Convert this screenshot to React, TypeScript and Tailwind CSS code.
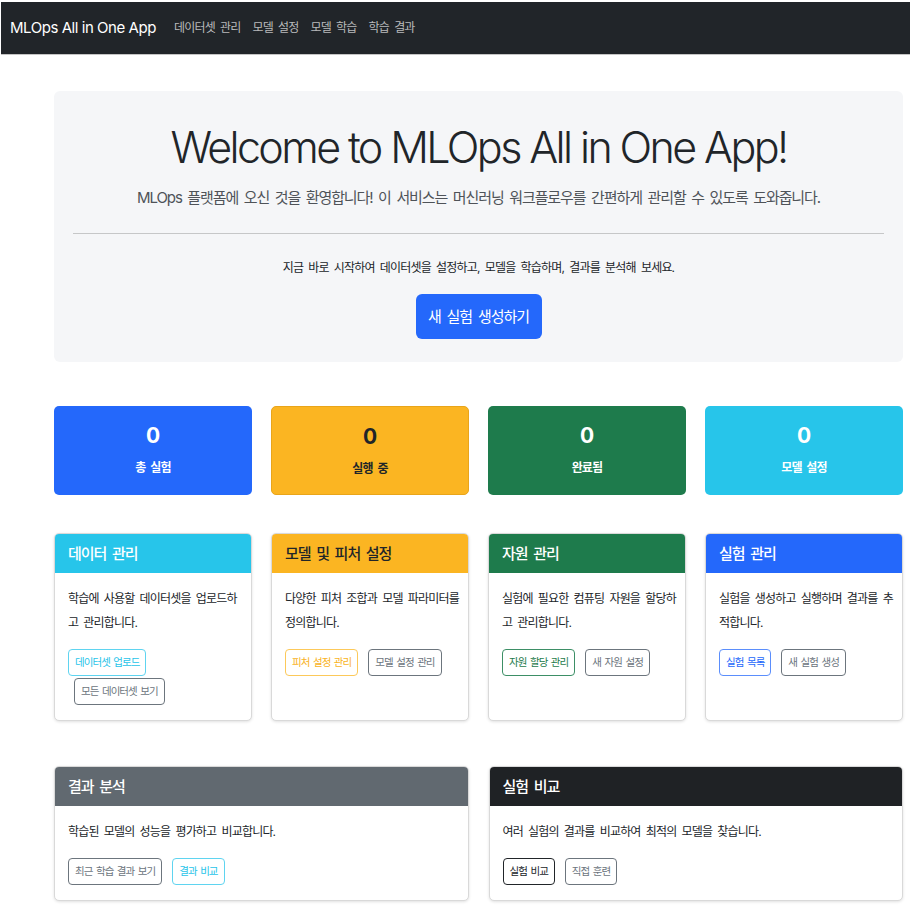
import React from "react";

const font = "font-['Inter','Noto_Sans_CJK_KR',sans-serif]";
// korean text tuned to the narrow look of the page
const k16 = "text-[12px] leading-[24px] tracking-[-0.8px] [word-spacing:2.5px]";
const k14 = "text-[10.5px] leading-[20px] tracking-[-0.95px] [word-spacing:1.5px]";
const k20 = "text-[15px] leading-[24px] tracking-[-1px] [word-spacing:2.6px]";

const navLinks = ["데이터셋 관리", "모델 설정", "모델 학습", "학습 결과"];

const stats = [
  { label: "총 실험", cls: "bg-[#2468fb] text-white" },
  { label: "실행 중", cls: "bg-[#fbb522] text-[#212529] border border-[#e9a51a]" },
  { label: "완료됨", cls: "bg-[#1e7b4c] text-white" },
  { label: "모델 설정", cls: "bg-[#27c5ea] text-white" },
];

type Btn = { label: string; variant: keyof typeof outline };

const outline = {
  info: "border-[#5fd4f0] text-[#27c4e9]",
  secondary: "border-[#6c757d] text-[#6c757d]",
  warning: "border-[#fcc95a] text-[#f9b21c]",
  success: "border-[#3d8f66] text-[#1e7b4c]",
  primary: "border-[#5b8efc] text-[#2468fb]",
  dark: "border-[#212529] text-[#212529]",
};

type Card = { title: string; head: string; lines: string[]; buttons: Btn[] };

const features: Card[] = [
  {
    title: "데이터 관리",
    head: "bg-[#27c5ea] text-white",
    lines: ["학습에 사용할 데이터셋을 업로드하", "고 관리합니다."],
    buttons: [
      { label: "데이터셋 업로드", variant: "info" },
      { label: "모든 데이터셋 보기", variant: "secondary" },
    ],
  },
  {
    title: "모델 및 피처 설정",
    head: "bg-[#fbb522] text-[#212529]",
    lines: ["다양한 피처 조합과 모델 파라미터를", "정의합니다."],
    buttons: [
      { label: "피처 설정 관리", variant: "warning" },
      { label: "모델 설정 관리", variant: "secondary" },
    ],
  },
  {
    title: "자원 관리",
    head: "bg-[#1e7b4c] text-white",
    lines: ["실험에 필요한 컴퓨팅 자원을 할당하", "고 관리합니다."],
    buttons: [
      { label: "자원 할당 관리", variant: "success" },
      { label: "새 자원 설정", variant: "secondary" },
    ],
  },
  {
    title: "실험 관리",
    head: "bg-[#2468fb] text-white",
    lines: ["실험을 생성하고 실행하며 결과를 추", "적합니다."],
    buttons: [
      { label: "실험 목록", variant: "primary" },
      { label: "새 실험 생성", variant: "secondary" },
    ],
  },
];

const bottom: Card[] = [
  {
    title: "결과 분석",
    head: "bg-[#616970] text-white",
    lines: ["학습된 모델의 성능을 평가하고 비교합니다."],
    buttons: [
      { label: "최근 학습 결과 보기", variant: "secondary" },
      { label: "결과 비교", variant: "info" },
    ],
  },
  {
    title: "실험 비교",
    head: "bg-[#1f2225] text-white",
    lines: ["여러 실험의 결과를 비교하여 최적의 모델을 찾습니다."],
    buttons: [
      { label: "실험 비교", variant: "dark" },
      { label: "직접 훈련", variant: "secondary" },
    ],
  },
];

function FeatureCard({ title, head, lines, buttons }: Card) {
  return (
    <div className="flex flex-col overflow-hidden rounded-[5px] border border-[#d9d9d9] bg-white shadow-[0_1px_3px_rgba(0,0,0,0.12)]">
      <div className={`flex h-[39px] items-center px-[13px] font-medium ${k20} ${head}`}>{title}</div>
      <div className="px-[13px] pt-[14px] pb-[15px]">
        <p className={`text-[#212529] ${k16}`}>
          {lines.map((l, i) => (
            <span key={i} className="block whitespace-nowrap">
              {l}
            </span>
          ))}
        </p>
        <div className="mt-[14px] flex flex-wrap items-start gap-x-[4px] gap-y-[2px]">
          {buttons.map((b, i) => (
            <button
              key={b.label}
              className={`h-[27px] whitespace-nowrap rounded-[4px] border bg-white px-[6px] ${k14} ${outline[b.variant]} ${i > 0 ? "ml-[6px]" : ""}`}
            >
              {b.label}
            </button>
          ))}
        </div>
      </div>
    </div>
  );
}

export default function App() {
  return (
    <div className={`min-h-[911px] bg-white pt-[2px] ${font}`}>
      <nav className="ml-[1px] mr-[2px] flex h-[53px] items-center border-b border-[#c4c4c4] bg-[#212529] pl-[9px]">
        <span className="text-[15px] tracking-[-0.45px] text-white">MLOps All in One App</span>
        <div className="ml-[18px] flex gap-[12px]">
          {navLinks.map((l) => (
            <a key={l} className={`text-[#b9babb] ${k16}`}>
              {l}
            </a>
          ))}
        </div>
      </nav>

      <main className="pl-[54px] pr-[9px] pt-[36px]">
        <section className="flex flex-col items-center rounded-[6px] bg-[#f5f6f8] px-[19px] pt-[31px] pb-[23px]">
          <h1 className="text-[43px] leading-[50px] font-light tracking-[-2.6px] text-[#212529]">
            Welcome to MLOps All in One App!
          </h1>
          <p className="mt-[14px] text-[15px] leading-[24px] tracking-[-1.1px] text-[#4f5358] [word-spacing:2.5px]">
            MLOps 플랫폼에 오신 것을 환영합니다! 이 서비스는 머신러닝 워크플로우를 간편하게 관리할 수 있도록 도와줍니다.
          </p>
          <hr className="mt-[23px] w-full border-t border-[#c6c7c8]" />
          <p className={`mt-[22px] text-[#212529] ${k16}`}>
            지금 바로 시작하여 데이터셋을 설정하고, 모델을 학습하며, 결과를 분석해 보세요.
          </p>
          <button className={`mt-[14px] flex h-[45px] w-[126px] items-center justify-center rounded-[6px] bg-[#2468fb] text-white ${k20}`}>
            새 실험 생성하기
          </button>
        </section>

        <section className="mt-[44px] grid grid-cols-4 gap-x-[19px]">
          {stats.map((s) => (
            <div
              key={s.label}
              className={`flex h-[89px] flex-col items-center rounded-[5px] pt-[18px] ${s.cls}`}
            >
              <span className="text-[21px] leading-[24px] font-bold">0</span>
              <span className={`mt-[8px] font-semibold ${k16}`}>{s.label}</span>
            </div>
          ))}
        </section>

        <section className="mt-[38px] grid grid-cols-4 gap-x-[19px]">
          {features.map((f) => (
            <FeatureCard key={f.title} {...f} />
          ))}
        </section>

        <section className="mt-[45px] grid grid-cols-2 gap-x-[20px]">
          {bottom.map((f) => (
            <FeatureCard key={f.title} {...f} />
          ))}
        </section>
      </main>
    </div>
  );
}
